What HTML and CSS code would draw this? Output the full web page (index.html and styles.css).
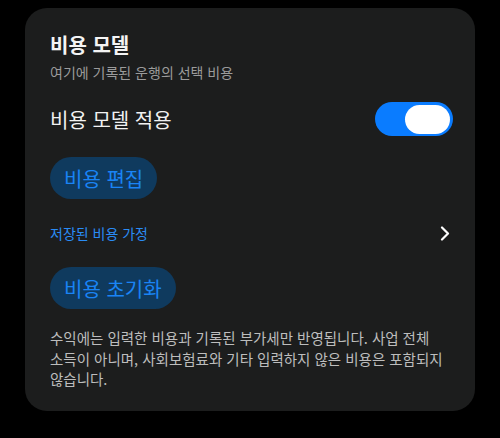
FILE: index.html
```html
<!DOCTYPE html>
<html lang="ko">
<head>
<meta charset="utf-8">
<link rel="stylesheet" href="styles.css">
</head>
<body>
<div class="card">
  <div class="title">비용 모델</div>
  <div class="subtitle">여기에 기록된 운행의 선택 비용</div>
  <div class="row toggle-row">
    <span class="row-label">비용 모델 적용</span>
    <span class="toggle"><span class="knob"></span></span>
  </div>
  <div class="btn-wrap first"><span class="pill">비용 편집</span></div>
  <div class="row link-row">
    <span class="link-label">저장된 비용 가정</span>
    <svg class="chev" width="10" height="15" viewBox="0 0 10 15"><path d="M2 1.5 L8 7.5 L2 13.5" fill="none" stroke="#ffffff" stroke-width="2.2" stroke-linecap="round" stroke-linejoin="round"/></svg>
  </div>
  <div class="btn-wrap"><span class="pill">비용 초기화</span></div>
  <p class="note">수익에는 입력한 비용과 기록된 부가세만 반영됩니다. 사업 전체 소득이 아니며, 사회보험료와 기타 입력하지 않은 비용은 포함되지 않습니다.</p>
</div>
</body>
</html>
```
FILE: styles.css
```css
html, body {
  margin: 0;
  padding: 0;
  background: #000000;
}
body {
  width: 500px;
  height: 438px;
  font-family: "Noto Sans CJK KR", "Noto Sans", sans-serif;
  overflow: hidden;
}
.card {
  margin: 8px 25px 0 25px;
  width: 450px;
  height: 403px;
  box-sizing: border-box;
  background: #1c1d1d;
  border-radius: 22px;
  padding: 24px 25px 0 25px;
  color: #f2f2f2;
}
.title {
  font-size: 20px;
  line-height: 26px;
  font-weight: 600;
  color: #f4f4f4;
}
.subtitle {
  margin-top: 4px;
  font-size: 14px;
  line-height: 20px;
  color: #9b9b9b;
}
.row {
  display: flex;
  align-items: center;
  justify-content: space-between;
}
.toggle-row {
  margin-top: 20px;
  height: 34px;
}
.row-label {
  font-size: 20px;
  color: #f2f2f2;
}
.toggle {
  width: 78px;
  height: 34px;
  border-radius: 17px;
  background: #0a7cff;
  display: flex;
  align-items: center;
  justify-content: flex-end;
  padding-right: 3px;
  box-sizing: border-box;
  margin-right: -3px;
}
.knob {
  width: 45px;
  height: 29px;
  border-radius: 15px;
  background: #ffffff;
}
.btn-wrap {
  display: flex;
  margin-top: 14px;
}
.btn-wrap.first {
  margin-top: 21px;
}
.pill {
  height: 42px;
  padding: 0 14px;
  border-radius: 21px;
  background: #0f3a5e;
  color: #1a84f5;
  font-size: 20px;
  display: flex;
  align-items: center;
}
.link-row {
  margin-top: 14px;
  height: 40px;
}
.link-label {
  font-size: 14px;
  color: #2a8cf5;
}
.note {
  margin: 19px 0 0 0;
  font-size: 14.5px;
  line-height: 20.5px;
  color: #bdbdbd;
  word-break: keep-all;
}
```
